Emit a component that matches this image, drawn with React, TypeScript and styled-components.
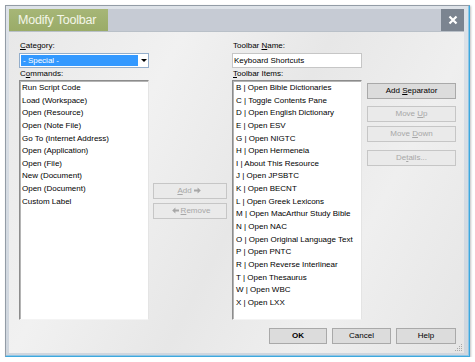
import React from "react";
import styled, { createGlobalStyle } from "styled-components";

const commands = [
  "Run Script Code",
  "Load (Workspace)",
  "Open (Resource)",
  "Open (Note File)",
  "Go To (Internet Address)",
  "Open (Application)",
  "Open (File)",
  "New (Document)",
  "Open (Document)",
  "Custom Label",
];

const toolbarItems = [
  "B | Open Bible Dictionaries",
  "C | Toggle Contents Pane",
  "D | Open English Dictionary",
  "E | Open ESV",
  "G | Open NIGTC",
  "H | Open Hermeneia",
  "I | About This Resource",
  "J | Open JPSBTC",
  "K | Open BECNT",
  "L | Open Greek Lexicons",
  "M | Open MacArthur Study Bible",
  "N | Open NAC",
  "O | Open Original Language Text",
  "P | Open PNTC",
  "R | Open Reverse Interlinear",
  "T | Open Thesaurus",
  "W | Open WBC",
  "X | Open LXX",
];

const Arrow = ({ dir }: { dir: "left" | "right" }) => (
  <svg width="7" height="7" viewBox="0 0 7 7" style={{ margin: "0 2px", verticalAlign: "-0.5px" }}>
    <path
      d={dir === "right" ? "M0 2.6h3.6V0.6L6.8 3.5 3.6 6.4V4.4H0z" : "M7 2.6H3.4V0.6L0.2 3.5 3.4 6.4V4.4H7z"}
      fill="currentColor"
    />
  </svg>
);

function App() {
  return (
    <>
      <GlobalStyle />
      <Window>
        <TitleBar>
          <TitleTab>Modify Toolbar</TitleTab>
          <CloseButton>
            <svg width="10" height="10" viewBox="0 0 10 10">
              <path d="M1.5 1.5l7 7M8.5 1.5l-7 7" stroke="#fff" strokeWidth="2.2" />
            </svg>
          </CloseButton>
        </TitleBar>

        <Body>
          <Columns>
            <Column>
              <Label>
                <Key>C</Key>ategory:
              </Label>
              <Select>
                <SelectValue>- Special -</SelectValue>
                <SelectArrow />
              </Select>
              <Label>
                C<Key>o</Key>mmands:
              </Label>
              <List>
                {commands.map((c) => (
                  <Row key={c}>{c}</Row>
                ))}
              </List>
            </Column>

            <MiddleColumn>
              <Button disabled>
                <Key>A</Key>dd
                <Arrow dir="right" />
              </Button>
              <Button disabled>
                <Arrow dir="left" />
                <Key>R</Key>emove
              </Button>
            </MiddleColumn>

            <Column $gap={5}>
              <Label>
                Toolbar <Key>N</Key>ame:
              </Label>
              <TextInput>Keyboard Shortcuts</TextInput>
              <Label>
                <Key>T</Key>oolbar Items:
              </Label>
              <List>
                {toolbarItems.map((t) => (
                  <Row key={t} $indent>
                    {t}
                  </Row>
                ))}
              </List>
            </Column>

            <ActionColumn>
              <Button>
                Add <Key>S</Key>eparator
              </Button>
              <Button disabled $space={7}>
                Move <Key>U</Key>p
              </Button>
              <Button disabled $space={4}>
                Move <Key>D</Key>own
              </Button>
              <Button disabled $space={8}>
                De<Key>t</Key>ails...
              </Button>
            </ActionColumn>
          </Columns>

          <Footer>
            <Button $width={58} $bold>
              OK
            </Button>
            <Button $width={59}>Cancel</Button>
            <Button $width={60}>Help</Button>
          </Footer>

          <Grip>
            <svg width="9" height="9" viewBox="0 0 9 9">
              <g fill="#a8a8a8">
                <rect x="7" y="1" width="1" height="1" />
                <rect x="5" y="3" width="1" height="1" />
                <rect x="7" y="3" width="1" height="1" />
                <rect x="3" y="5" width="1" height="1" />
                <rect x="5" y="5" width="1" height="1" />
                <rect x="7" y="5" width="1" height="1" />
                <rect x="1" y="7" width="1" height="1" />
                <rect x="3" y="7" width="1" height="1" />
                <rect x="5" y="7" width="1" height="1" />
                <rect x="7" y="7" width="1" height="1" />
              </g>
            </svg>
          </Grip>
        </Body>
      </Window>
    </>
  );
}

const GlobalStyle = createGlobalStyle`
  body {
    margin: 0;
    background: #fff;
    font-family: "Liberation Sans", Arial, sans-serif;
  }
`;

const Window = styled.div`
  box-sizing: border-box;
  width: 465px;
  height: 352px;
  margin: 5px 0 0 5px;
  padding: 3px 5px 3px 3px;
  border: 1px solid #939ca6;
  border-right-color: #3ea8dd;
  border-bottom-color: #3ea8dd;
  background: linear-gradient(180deg, #dde2e8, #cfd6de);
  box-shadow: 1px 1px 2px rgba(0, 0, 0, 0.25), inset -1px -1px 0 #8fc6e6;
  display: flex;
  flex-direction: column;
`;

const TitleBar = styled.div`
  height: 22px;
  display: flex;
  background: #c6cbd4;
  flex-shrink: 0;
`;

const TitleTab = styled.div`
  width: 99px;
  padding-left: 9px;
  box-sizing: border-box;
  display: flex;
  align-items: center;
  background: linear-gradient(180deg, #a6b677, #9aab68);
  color: #f4f6e8;
  font-size: 12.5px;
  letter-spacing: -0.2px;
`;

const CloseButton = styled.div`
  margin-left: auto;
  width: 23px;
  display: flex;
  align-items: center;
  justify-content: center;
  background: #7b8490;
`;

const Body = styled.div`
  position: relative;
  flex: 1;
  padding: 8px 8px 0 10px;
  background: linear-gradient(118deg, #e8e8e8 0%, #f1f1f1 28%, #e7e7e7 52%, #efefef 74%, #e5e5e5 100%);
  border-top: 1px solid #b9c0c8;
  font-size: 8px;
  color: #000;
`;

const Columns = styled.div`
  display: flex;
  align-items: flex-start;
`;

const Column = styled.div<{ $gap?: number }>`
  width: 130px;
  margin-left: ${({ $gap }) => $gap ?? 0}px;
  display: flex;
  flex-direction: column;
`;

const MiddleColumn = styled.div`
  width: 74px;
  margin-left: 4px;
  padding-top: 143px;
  display: flex;
  flex-direction: column;
  gap: 4px;
`;

const ActionColumn = styled.div`
  width: 89px;
  margin-left: 5px;
  padding-top: 43px;
  display: flex;
  flex-direction: column;
`;

const Label = styled.div`
  height: 12px;
  line-height: 12px;
  padding-left: 1px;
`;

const Key = styled.span`
  text-decoration: underline;
`;

const Select = styled.div`
  box-sizing: border-box;
  height: 15px;
  margin: 1px 0 0;
  border: 1px solid #93aecb;
  background: #fff;
  display: flex;
  align-items: center;
  padding: 1px;
`;

const SelectValue = styled.div`
  width: 117px;
  height: 11px;
  line-height: 11px;
  background: #3399ff;
  color: #fff;
  padding-left: 2px;
  box-sizing: border-box;
`;

const SelectArrow = styled.div`
  margin-left: 3px;
  width: 0;
  height: 0;
  border-left: 3px solid transparent;
  border-right: 3px solid transparent;
  border-top: 3px solid #000;
`;

const TextInput = styled.div`
  box-sizing: border-box;
  height: 15px;
  margin: 1px 0 0;
  border: 1px solid #c6c6c6;
  background: #fff;
  line-height: 13px;
  padding-left: 1px;
`;

const List = styled.div`
  box-sizing: border-box;
  height: 240px;
  background: #fff;
  border: 1px solid;
  border-color: #8c8c8c #e4e4e4 #f4f4f4 #8c8c8c;
  box-shadow: inset 1px 1px 0 #b4b4b4;
  padding: 1px 0 0 2px;
`;

const Row = styled.div<{ $indent?: boolean }>`
  height: 12.65px;
  line-height: 12.65px;
  white-space: nowrap;
  padding-left: ${({ $indent }) => ($indent ? 1 : 0)}px;
`;

const Button = styled.button<{ $space?: number; $width?: number; $bold?: boolean }>`
  box-sizing: border-box;
  display: block;
  height: 16px;
  width: ${({ $width }) => ($width ? `${$width}px` : "100%")};
  margin-top: ${({ $space }) => $space ?? 0}px;
  padding: 0;
  font-family: "Liberation Sans", Arial, sans-serif;
  font-size: 8px;
  line-height: 14px;
  text-align: center;
  white-space: nowrap;
  font-weight: ${({ $bold }) => ($bold ? 700 : 400)};
  color: #000;
  background: #dcdcdc;
  border: 1px solid #a9a9a9;
  border-radius: 0;

  &:disabled {
    color: #a7a7a7;
    background: #eaeaea;
    border-color: #c6c6c6;
  }
`;

const Footer = styled.div`
  display: flex;
  justify-content: flex-end;
  gap: 5px;
  margin-top: 8px;
`;

const Grip = styled.div`
  position: absolute;
  right: 1px;
  bottom: 1px;
  line-height: 0;
`;

export default App;
